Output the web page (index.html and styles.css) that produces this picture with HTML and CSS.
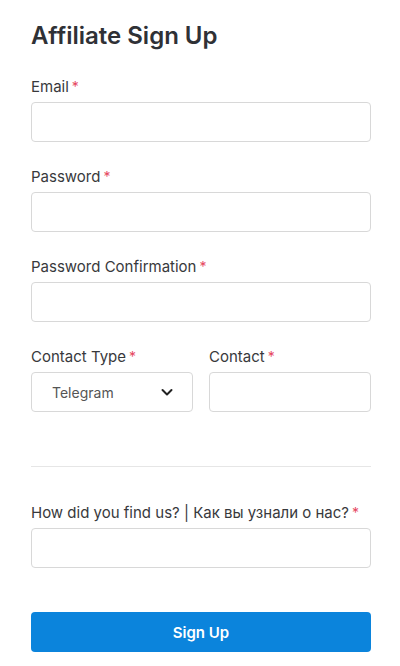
FILE: index.html
```html
<!DOCTYPE html>
<html lang="en">
<head>
  <meta charset="UTF-8" />
  <title>Affiliate Sign Up</title>
  <link rel="stylesheet" href="styles.css">
</head>
<body>
  <form class="signup">
    <h1>Affiliate Sign Up</h1>

    <div class="field">
      <label>Email<span class="req">*</span></label>
      <input type="email" />
    </div>

    <div class="field">
      <label>Password<span class="req">*</span></label>
      <input type="password" />
    </div>

    <div class="field">
      <label>Password Confirmation<span class="req">*</span></label>
      <input type="password" />
    </div>

    <div class="row">
      <div class="field">
        <label>Contact Type<span class="req">*</span></label>
        <div class="select">
          <span>Telegram</span>
          <svg width="14" height="14" viewBox="0 0 14 14"><path d="M2.5 5 L7 9.5 L11.5 5" fill="none" stroke="#222" stroke-width="2" stroke-linecap="round" stroke-linejoin="round"/></svg>
        </div>
      </div>
      <div class="field">
        <label>Contact<span class="req">*</span></label>
        <input type="text" />
      </div>
    </div>

    <hr class="divider" />

    <div class="field">
      <label>How did you find us? | Как вы узнали о нас?<span class="req">*</span></label>
      <input type="text" />
    </div>

    <button type="button" class="submit">Sign Up</button>
  </form>
</body>
</html>
```

FILE: styles.css
```css
body {
  margin: 0;
  background: #fff;
  font-family: Inter, "Noto Sans", sans-serif;
  color: #333;
}
.signup {
  width: 340px;
  padding: 20px 29px 0 31px;
  display: flex;
  flex-direction: column;
}
h1 {
  margin: 0 0 25px;
  font-size: 24px;
  font-weight: 600;
  color: #2f3136;
  line-height: 32px;
}
.field {
  display: flex;
  flex-direction: column;
  margin-bottom: 25px;
}
.field label {
  font-size: 15px;
  line-height: 20px;
  margin-bottom: 5px;
  color: #38393c;
}
.req {
  color: #e6475f;
  margin-left: 3px;
  font-size: 14px;
}
.field input,
.select {
  box-sizing: border-box;
  height: 40px;
  width: 100%;
  border: 1px solid #d8d8d8;
  border-radius: 4px;
  background: #fff;
  font: inherit;
}
.row {
  display: flex;
  gap: 16px;
}
.row .field {
  flex: 1;
  margin-bottom: 0;
}
.select {
  display: flex;
  align-items: center;
  justify-content: space-between;
  padding: 0 18px 0 20px;
  font-size: 14px;
  color: #555;
}
.divider {
  border: none;
  border-top: 1px solid #e6e6e6;
  margin: 54px 0 36px;
}
.submit {
  margin-top: 19px;
  height: 40px;
  border: none;
  border-radius: 4px;
  background: #0b84dc;
  color: #fff;
  font: inherit;
  font-size: 15px;
  font-weight: 600;
}
```
